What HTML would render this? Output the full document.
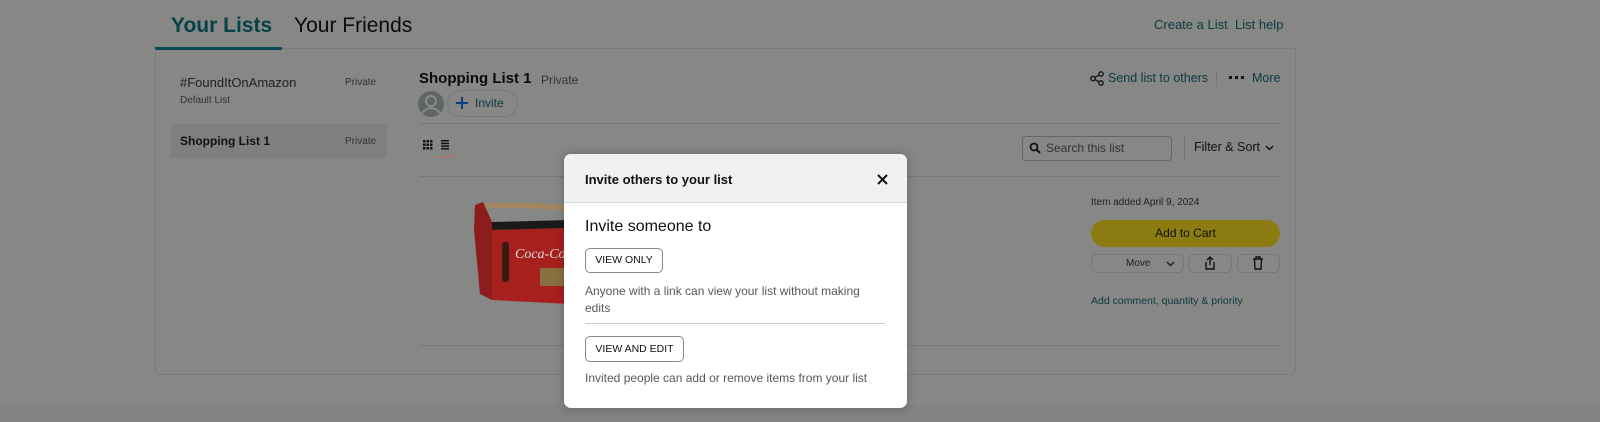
<!DOCTYPE html>
<html><head><meta charset="utf-8"><style>
*{margin:0;padding:0;box-sizing:border-box}
body{width:1600px;height:422px;overflow:hidden;background:#878786;font-family:"Liberation Sans",Arial,sans-serif;position:relative;color:#0a0a0a}
.a{position:absolute;white-space:nowrap}
.t{color:#0b3a40}
</style></head><body>
<div class="a" style="left:0;top:405px;width:1600px;height:17px;background:#828282"></div>
<div class="a" style="left:171px;top:14px;font-size:21px;font-weight:bold;color:#074148">Your Lists</div>
<div class="a" style="left:294px;top:14px;font-size:21px;color:#0a0a0a">Your Friends</div>
<div class="a" style="left:155px;top:48px;width:1141px;height:1px;background:#7a7a7a"></div>
<div class="a" style="left:155px;top:47px;width:127px;height:3px;background:#0a4a52"></div>
<div class="a t" style="left:1154px;top:17px;font-size:13px">Create a List</div>
<div class="a t" style="left:1235px;top:17px;font-size:13px">List help</div>
<div class="a" style="left:155px;top:49px;width:1141px;height:326px;border:1px solid #7a7a7a;border-top:none;border-radius:0 0 6px 6px"></div>
<div class="a" style="left:180px;top:75px;font-size:13px;color:#222">#FoundItOnAmazon</div>
<div class="a" style="left:180px;top:95px;font-size:10px;color:#333">Default List</div>
<div class="a" style="left:345px;top:77px;font-size:10px;color:#333">Private</div>
<div class="a" style="left:171px;top:124px;width:216px;height:34px;background:#7f7f7f"></div>
<div class="a" style="left:180px;top:134px;font-size:12px;font-weight:bold;color:#111">Shopping List 1</div>
<div class="a" style="left:345px;top:136px;font-size:10px;color:#333">Private</div>
<div class="a" style="left:419px;top:70px;font-size:15px;font-weight:bold;color:#0a0a0a">Shopping List 1</div>
<div class="a" style="left:541px;top:73px;font-size:12px;color:#333">Private</div>
<svg class="a" style="left:418px;top:91px" width="26" height="26" viewBox="0 0 26 26"><circle cx="13" cy="13" r="13" fill="#5f6566"/><circle cx="13" cy="10" r="5" fill="none" stroke="#8a8a8a" stroke-width="2"/><path d="M4 22 Q13 12 22 22" fill="none" stroke="#8a8a8a" stroke-width="2"/></svg>
<div class="a" style="left:447px;top:90px;width:71px;height:27px;border:1px solid #777;border-radius:14px"></div>
<svg class="a" style="left:455px;top:96px" width="14" height="14" viewBox="0 0 14 14"><path d="M7 1V13M1 7H13" stroke="#0a3d80" stroke-width="2"/></svg>
<div class="a t" style="left:475px;top:96px;font-size:12px">Invite</div>
<div class="a" style="left:419px;top:123px;width:861px;height:1px;background:#777"></div>
<svg class="a" style="left:423px;top:140px" width="30" height="10" viewBox="0 0 30 10"><g fill="#111"><rect x="0" y="0" width="2.5" height="2.5"/><rect x="3.5" y="0" width="2.5" height="2.5"/><rect x="7" y="0" width="2.5" height="2.5"/><rect x="0" y="3.5" width="2.5" height="2.5"/><rect x="3.5" y="3.5" width="2.5" height="2.5"/><rect x="7" y="3.5" width="2.5" height="2.5"/><rect x="0" y="7" width="2.5" height="2.5"/><rect x="3.5" y="7" width="2.5" height="2.5"/><rect x="7" y="7" width="2.5" height="2.5"/><rect x="18" y="0" width="8" height="1.5"/><rect x="18" y="2.7" width="8" height="1.5"/><rect x="18" y="5.4" width="8" height="1.5"/><rect x="18" y="8.1" width="8" height="1.5"/></g></svg>
<div class="a" style="left:437px;top:156px;width:18px;height:2px;background:#a0796a"></div>
<div class="a" style="left:1022px;top:136px;width:150px;height:25px;border:1px solid #666;border-radius:4px"></div>
<svg class="a" style="left:1029px;top:142px" width="12" height="12" viewBox="0 0 12 12"><circle cx="5" cy="5" r="3.5" fill="none" stroke="#111" stroke-width="1.8"/><path d="M7.5 7.5L11 11" stroke="#111" stroke-width="2"/></svg>
<div class="a" style="left:1046px;top:141px;font-size:12px;color:#333">Search this list</div>
<div class="a" style="left:1184px;top:136px;width:1px;height:25px;background:#777"></div>
<div class="a" style="left:1194px;top:140px;font-size:12.5px;color:#111">Filter &amp; Sort</div>
<svg class="a" style="left:1265px;top:145px" width="9" height="6" viewBox="0 0 9 6"><path d="M1 1L4.5 4.5L8 1" fill="none" stroke="#111" stroke-width="1.5"/></svg>
<svg class="a" style="left:1090px;top:71px" width="14" height="15" viewBox="0 0 14 15"><g fill="none" stroke="#111" stroke-width="1.3"><circle cx="3" cy="7.5" r="2.2"/><circle cx="11" cy="3" r="2.2"/><circle cx="11" cy="12" r="2.2"/><path d="M5 6.4L9 4.1M5 8.6L9 10.9"/></g></svg>
<div class="a t" style="left:1108px;top:71px;font-size:12.5px">Send list to others</div>
<div class="a" style="left:1216px;top:70px;width:1px;height:16px;background:#777"></div>
<svg class="a" style="left:1229px;top:76px" width="16" height="4" viewBox="0 0 16 4"><g fill="#111"><rect x="0" y="0" width="3" height="3"/><rect x="6" y="0" width="3" height="3"/><rect x="12" y="0" width="3" height="3"/></g></svg>
<div class="a t" style="left:1252px;top:71px;font-size:12.5px">More</div>
<div class="a" style="left:419px;top:176px;width:861px;height:1px;background:#777"></div>
<div class="a" style="left:419px;top:345px;width:861px;height:1px;background:#777"></div>
<!-- product -->
<svg class="a" style="left:470px;top:200px" width="100" height="112" viewBox="0 0 100 112"><path d="M15 6 Q55 4 95 8" stroke="#a4865e" stroke-width="5" fill="none"/><path d="M5 5 L13 2 L22 22 L22 100 L10 94 L4 30 Z" fill="#8d1c1c"/><path d="M22 22 L100 20 L100 28 L22 30 Z" fill="#1a1a1a"/><path d="M22 30 L100 28 L100 104 L22 100 Z" fill="#a8201e"/><rect x="32" y="42" width="7" height="40" rx="3" fill="#3a1a12"/><text x="45" y="58" font-size="14" font-style="italic" font-family="Liberation Serif" fill="#ddd">Coca-Cola</text><rect x="70" y="68" width="30" height="18" fill="#8a7040"/></svg>
<div class="a" style="left:1091px;top:197px;font-size:10px;color:#222">Item added April 9, 2024</div>
<div class="a" style="left:1091px;top:220px;width:189px;height:27px;background:#8c7b10;border-radius:14px;text-align:center;line-height:27px;font-size:12px;color:#111">Add to Cart</div>
<div class="a" style="left:1091px;top:254px;width:93px;height:19px;border:1px solid #777;border-radius:6px;font-size:10px;color:#222;padding:3px 0 0 34px">Move</div>
<svg class="a" style="left:1166px;top:261px" width="9" height="6" viewBox="0 0 9 6"><path d="M1 1L4.5 4.5L8 1" fill="none" stroke="#222" stroke-width="1.5"/></svg>
<div class="a" style="left:1188px;top:254px;width:44px;height:19px;border:1px solid #777;border-radius:6px"></div>
<svg class="a" style="left:1204px;top:256px" width="12" height="14" viewBox="0 0 12 14"><g fill="none" stroke="#111" stroke-width="1.4"><path d="M6 9V1M3 4L6 1L9 4"/><path d="M2 6V13H10V6"/></g></svg>
<div class="a" style="left:1237px;top:254px;width:43px;height:19px;border:1px solid #777;border-radius:6px"></div>
<svg class="a" style="left:1252px;top:256px" width="12" height="14" viewBox="0 0 12 14"><g fill="none" stroke="#111" stroke-width="1.4"><path d="M1 3H11M4 3V1H8V3"/><path d="M2.5 3L3 13H9L9.5 3"/></g></svg>
<div class="a t" style="left:1091px;top:295px;font-size:10.5px">Add comment, quantity &amp; priority</div>
<!-- modal -->
<div class="a" style="left:564px;top:154px;width:343px;height:254px;background:#fff;border-radius:7px;overflow:hidden;box-shadow:0 0 10px rgba(0,0,0,.25)">
<div style="height:49px;background:#f0f2f2;border-bottom:1px solid #d5d9d9"></div>
<div class="a" style="left:21px;top:18px;font-size:13px;font-weight:bold;color:#0f1111">Invite others to your list</div>
<svg class="a" style="left:313px;top:20px" width="11" height="11" viewBox="0 0 11 11"><path d="M1 1L10 10M10 1L1 10" stroke="#0f1111" stroke-width="2"/></svg>
<div class="a" style="left:21px;top:64px;font-size:16px;color:#0f1111">Invite someone to</div>
<div class="a" style="left:21px;top:94px;width:78px;height:25px;border:1px solid #888;border-radius:5px;font-size:10.5px;text-align:center;line-height:23px;color:#0f1111">VIEW ONLY</div>
<div class="a" style="left:21px;top:129px;font-size:12px;color:#565959;line-height:17px">Anyone with a link can view your list without making<br>edits</div>
<div class="a" style="left:21px;top:169px;width:300px;height:1px;background:#ccc"></div>
<div class="a" style="left:21px;top:182px;width:99px;height:26px;border:1px solid #888;border-radius:5px;font-size:10.5px;text-align:center;line-height:24px;color:#0f1111">VIEW AND EDIT</div>
<div class="a" style="left:21px;top:217px;font-size:12px;color:#565959">Invited people can add or remove items from your list</div>
</div>
</body></html>
